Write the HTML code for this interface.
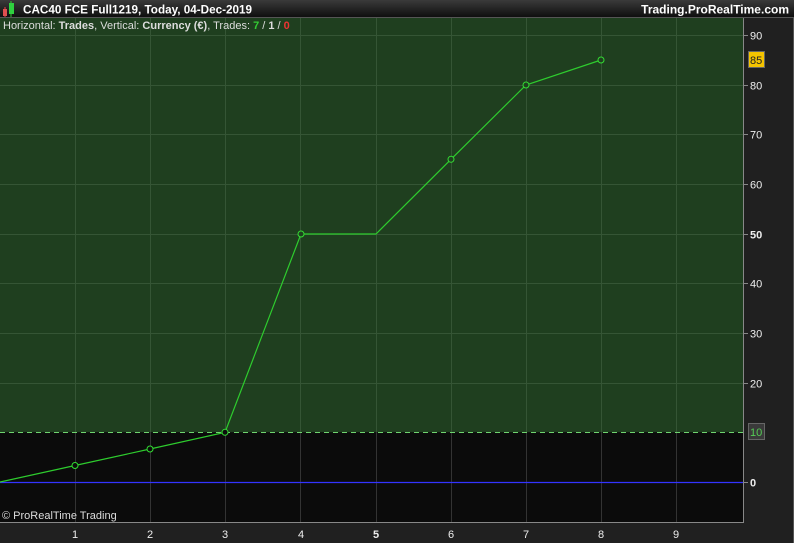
<!DOCTYPE html>
<html><head><meta charset="utf-8"><style>
html,body{margin:0;padding:0;background:#1f1f1f;width:794px;height:543px;overflow:hidden}
svg{display:block;font-family:"Liberation Sans",sans-serif}
</style></head><body>
<svg width="794" height="543" viewBox="0 0 794 543">
<defs><linearGradient id="tb" x1="0" y1="0" x2="0" y2="1"><stop offset="0" stop-color="#3a3a3a"/><stop offset="1" stop-color="#0c0c0c"/></linearGradient></defs>
<rect x="0" y="0" width="794" height="543" fill="#202020"/>
<rect x="0" y="0" width="794" height="18" fill="url(#tb)"/>
<rect x="0" y="17" width="794" height="1" fill="#555"/>
<line x1="5" y1="7" x2="5" y2="17" stroke="#e44" stroke-width="1"/>
<rect x="3" y="9" width="4" height="7" fill="#e05050"/>
<line x1="11" y1="1" x2="11" y2="17" stroke="#3c3" stroke-width="1"/>
<rect x="9" y="3" width="5" height="11" fill="#2fd03f"/>
<text x="23" y="13.5" fill="#fff" font-size="12" font-weight="bold" textLength="229" lengthAdjust="spacingAndGlyphs">CAC40 FCE Full1219, Today, 04-Dec-2019</text>
<text x="789" y="13.5" fill="#fff" font-size="12" font-weight="bold" text-anchor="end">Trading.ProRealTime.com</text>
<rect x="0" y="18" width="743" height="414.3" fill="#1f3f1f"/>
<rect x="0" y="432.3" width="743" height="90" fill="#0b0b0b"/>
<g stroke="#355535" stroke-width="1">
<line x1="0" y1="35.5" x2="743" y2="35.5"/><line x1="0" y1="85.5" x2="743" y2="85.5"/><line x1="0" y1="134.5" x2="743" y2="134.5"/><line x1="0" y1="184.5" x2="743" y2="184.5"/><line x1="0" y1="234.5" x2="743" y2="234.5"/><line x1="0" y1="283.5" x2="743" y2="283.5"/><line x1="0" y1="333.5" x2="743" y2="333.5"/><line x1="0" y1="383.5" x2="743" y2="383.5"/>
</g>
<g stroke="#355535"><line x1="75.5" y1="18" x2="75.5" y2="432"/><line x1="150.5" y1="18" x2="150.5" y2="432"/><line x1="225.5" y1="18" x2="225.5" y2="432"/><line x1="300.5" y1="18" x2="300.5" y2="432"/><line x1="376.5" y1="18" x2="376.5" y2="432"/><line x1="451.5" y1="18" x2="451.5" y2="432"/><line x1="526.5" y1="18" x2="526.5" y2="432"/><line x1="601.5" y1="18" x2="601.5" y2="432"/><line x1="676.5" y1="18" x2="676.5" y2="432"/></g>
<g stroke="#333"><line x1="75.5" y1="432" x2="75.5" y2="522"/><line x1="150.5" y1="432" x2="150.5" y2="522"/><line x1="225.5" y1="432" x2="225.5" y2="522"/><line x1="300.5" y1="432" x2="300.5" y2="522"/><line x1="376.5" y1="432" x2="376.5" y2="522"/><line x1="451.5" y1="432" x2="451.5" y2="522"/><line x1="526.5" y1="432" x2="526.5" y2="522"/><line x1="601.5" y1="432" x2="601.5" y2="522"/><line x1="676.5" y1="432" x2="676.5" y2="522"/></g>
<line x1="0" y1="432.5" x2="743" y2="432.5" stroke="#6fd46f" stroke-dasharray="5,4"/>
<line x1="0" y1="482.5" x2="743" y2="482.5" stroke="#3333ff" stroke-width="1.3"/>
<polyline points="0,482 75,465.5 150,449 225,432.3 301,234 376,234 451,159.3 526,85 601,60" fill="none" stroke="#2ecc2e" stroke-width="1.2"/>
<g fill="#1f3f1f" stroke="#33dd33" stroke-width="1"><circle cx="75" cy="465.5" r="3" fill="#0b0b0b"/><circle cx="150" cy="449" r="3" fill="#0b0b0b"/><circle cx="225" cy="432.3" r="3" fill="#0b0b0b"/><circle cx="301" cy="234" r="3"/><circle cx="451" cy="159.3" r="3"/><circle cx="526" cy="85" r="3"/><circle cx="601" cy="60" r="3"/></g>
<line x1="743.5" y1="18" x2="743.5" y2="523" stroke="#888"/>
<line x1="0" y1="522.5" x2="744" y2="522.5" stroke="#888"/>
<line x1="793.5" y1="18" x2="793.5" y2="543" stroke="#555"/>
<text x="3" y="29" font-size="11" fill="#ddd">Horizontal: <tspan font-weight="bold">Trades</tspan>, Vertical: <tspan font-weight="bold">Currency (€)</tspan>, Trades: <tspan fill="#3c3" font-weight="bold">7</tspan> / <tspan font-weight="bold">1</tspan> / <tspan fill="#e33" font-weight="bold">0</tspan></text>
<text x="2" y="519" font-size="11" fill="#ddd">© ProRealTime Trading</text>
<g stroke="#888"><line x1="743" y1="35.5" x2="748" y2="35.5"/><line x1="743" y1="85.5" x2="748" y2="85.5"/><line x1="743" y1="134.5" x2="748" y2="134.5"/><line x1="743" y1="184.5" x2="748" y2="184.5"/><line x1="743" y1="234.5" x2="748" y2="234.5"/><line x1="743" y1="283.5" x2="748" y2="283.5"/><line x1="743" y1="333.5" x2="748" y2="333.5"/><line x1="743" y1="383.5" x2="748" y2="383.5"/><line x1="743" y1="482.5" x2="748" y2="482.5"/></g>
<g font-size="11" fill="#eee"><text x="750" y="39.5">90</text><text x="750" y="89.5">80</text><text x="750" y="138.5">70</text><text x="750" y="188.5">60</text><text x="750" y="238.5" font-weight="bold">50</text><text x="750" y="287.5">40</text><text x="750" y="337.5">30</text><text x="750" y="387.5">20</text><text x="750" y="486.5" font-weight="bold">0</text></g>
<rect x="748.5" y="51.5" width="16" height="16" fill="#f5c400" stroke="#666"/>
<text x="750" y="64" font-size="11" fill="#222">85</text>
<rect x="748.5" y="423.5" width="16" height="16" fill="#3a3a3a" stroke="#666"/>
<text x="750" y="436" font-size="11" fill="#5c5">10</text>
<g font-size="11" fill="#eee" text-anchor="middle"><text x="75" y="538">1</text><text x="150" y="538">2</text><text x="225" y="538">3</text><text x="301" y="538">4</text><text x="376" y="538" font-weight="bold">5</text><text x="451" y="538">6</text><text x="526" y="538">7</text><text x="601" y="538">8</text><text x="676" y="538">9</text></g>
</svg>
</body></html>
